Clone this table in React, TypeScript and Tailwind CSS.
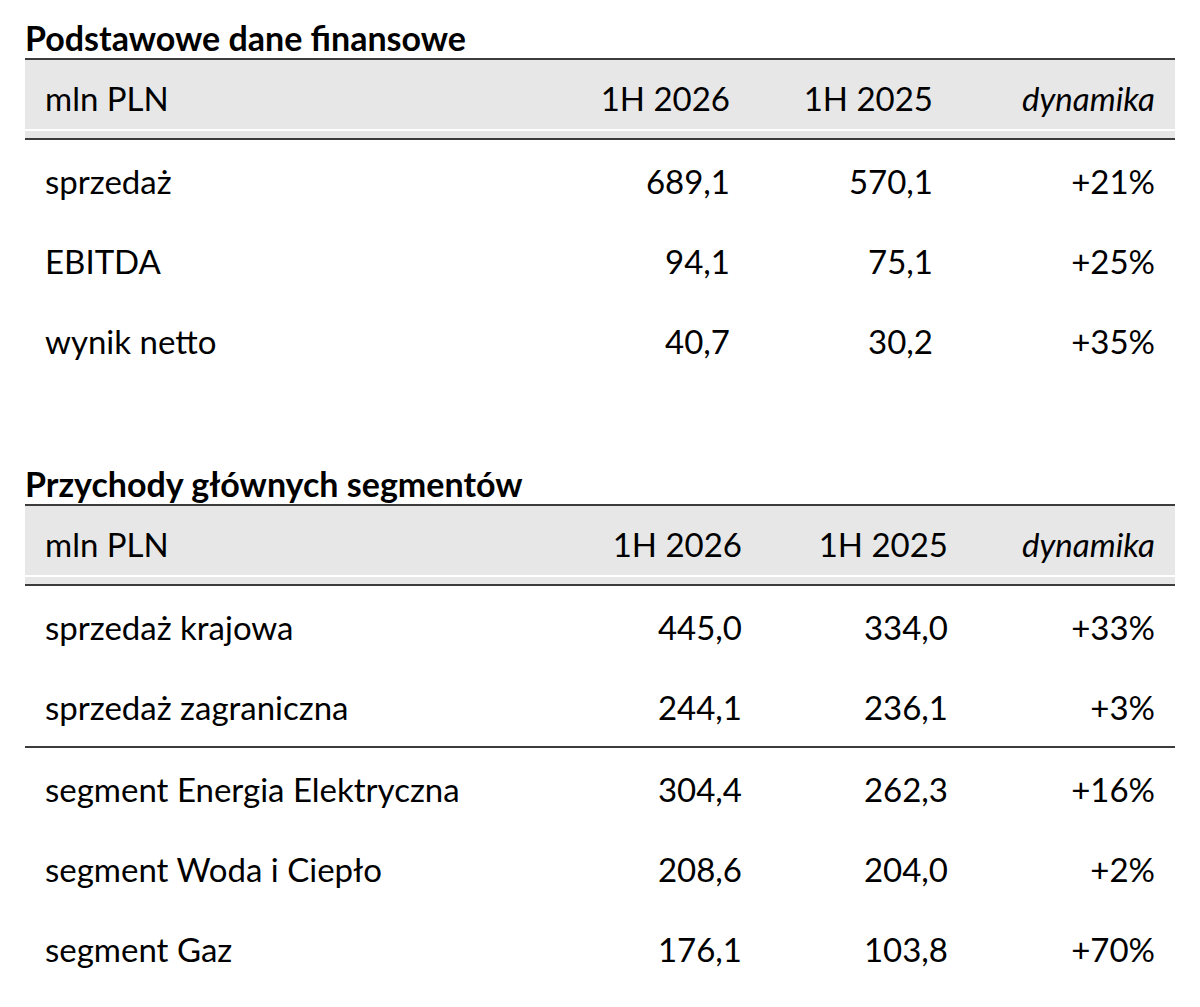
const FINANCE = [
  { label: 'sprzedaż', a: '689,1', b: '570,1', d: '+21%' },
  { label: 'EBITDA', a: '94,1', b: '75,1', d: '+25%' },
  { label: 'wynik netto', a: '40,7', b: '30,2', d: '+35%' },
];

const SALES = [
  { label: 'sprzedaż krajowa', a: '445,0', b: '334,0', d: '+33%' },
  { label: 'sprzedaż zagraniczna', a: '244,1', b: '236,1', d: '+3%' },
];

const SEGMENTS = [
  { label: 'segment Energia Elektryczna', a: '304,4', b: '262,3', d: '+16%' },
  { label: 'segment Woda i Ciepło', a: '208,6', b: '204,0', d: '+2%' },
  { label: 'segment Gaz', a: '176,1', b: '103,8', d: '+70%' },
];

type Row = { label: string; a: string; b: string; d: string };

function Header({ cols }: { cols: string }) {
  return (
    <div className="border-t-2 border-[#3c3c3c]">
      <div className={`grid ${cols} h-[69px] bg-[#e7e7e7] pt-[8px] leading-[61px]`}>
        <div className="pl-5">mln PLN</div>
        <div className="pr-5 text-right">1H 2026</div>
        <div className="pr-5 text-right">1H 2025</div>
        <div className="pr-5 text-right italic">dynamika</div>
      </div>
      <div className="h-[2px] bg-white" />
      <div className="h-[7px] bg-[#e7e7e7]" />
      <div className="h-[2px] bg-[#3c3c3c]" />
    </div>
  );
}

function Rows({ rows, cols }: { rows: Row[]; cols: string }) {
  return (
    <>
      {rows.map((r) => (
        <div key={r.label} className={`grid ${cols} h-[80px] pt-[1px] leading-[80px]`}>
          <div className="pl-5">{r.label}</div>
          <div className="pr-5 text-right">{r.a}</div>
          <div className="pr-5 text-right">{r.b}</div>
          <div className="pr-5 text-right">{r.d}</div>
        </div>
      ))}
    </>
  );
}

export default function App() {
  const cols1 = 'grid-cols-[545px_180px_203px_222px]';
  const cols2 = 'grid-cols-[557px_180px_206px_207px]';

  return (
    <div className="min-h-[1007px] w-[1200px] bg-white px-[25px] text-[33px] text-black [font-family:Lato,'Noto_Sans',sans-serif]">
      <h2 className="pt-[18px] text-[34px] font-bold leading-[40px]">Podstawowe dane finansowe</h2>
      <Header cols={cols1} />
      <Rows rows={FINANCE} cols={cols1} />

      <h2 className="mt-[84px] text-[34px] font-bold leading-[40px]">Przychody głównych segmentów</h2>
      <Header cols={cols2} />
      <Rows rows={SALES} cols={cols2} />
      <div className="h-[2px] bg-[#3c3c3c]" />
      <Rows rows={SEGMENTS} cols={cols2} />
    </div>
  );
}
